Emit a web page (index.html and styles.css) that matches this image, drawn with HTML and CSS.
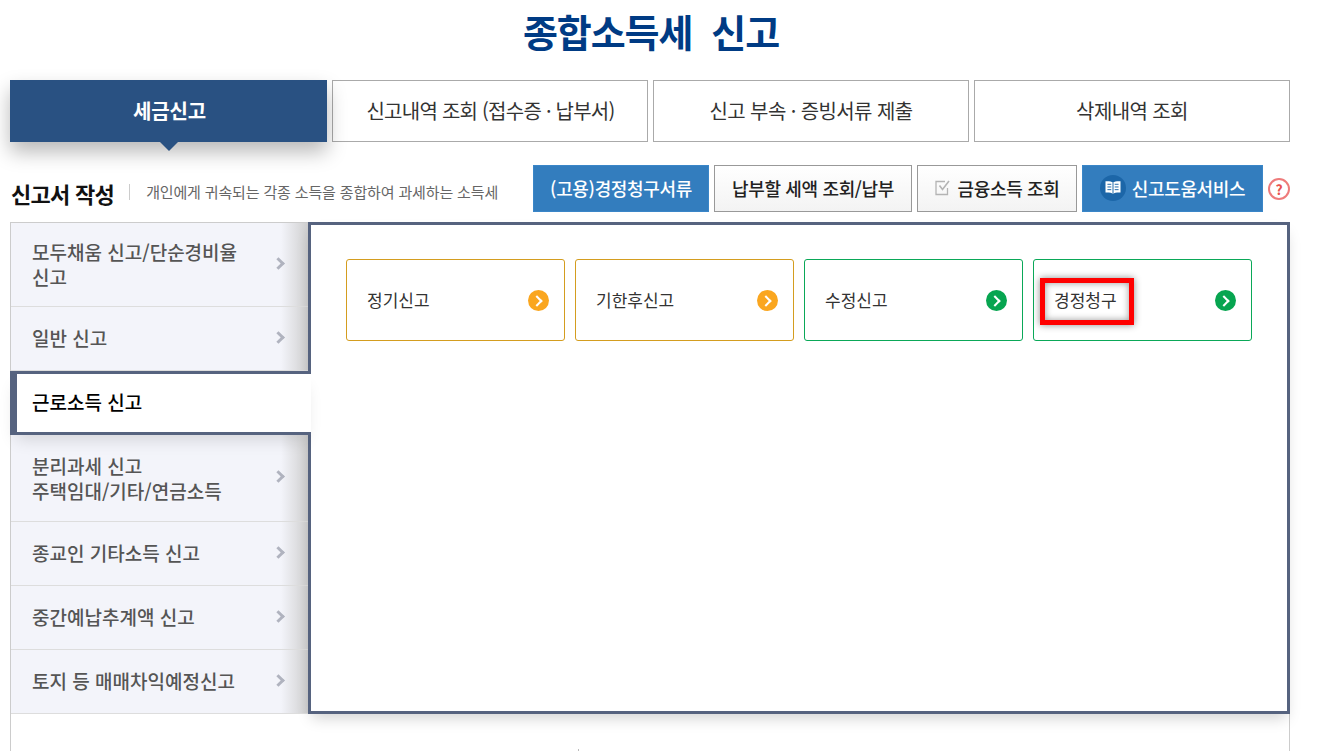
FILE: index.html
```html
<!DOCTYPE html>
<html lang="ko">
<head>
<meta charset="utf-8">
<title>종합소득세 신고</title>
<link rel="stylesheet" href="styles.css">
</head>
<body>
<div class="page">
  <h1 class="title">종합소득세&nbsp; 신고</h1>
  <nav class="tabs">
    <a class="tab tab-on">세금신고</a>
    <a class="tab tab-long">신고내역 조회 (접수증 · 납부서)</a>
    <a class="tab">신고 부속 · 증빙서류 제출</a>
    <a class="tab">삭제내역 조회</a>
  </nav>
  <div class="bar">
    <h2 class="sub">신고서 작성</h2>
    <p class="desc">개인에게 귀속되는 각종 소득을 종합하여 과세하는 소득세</p>
    <div class="btns">
      <a class="btn btn-blue btn-a">(고용)경정청구서류</a>
      <a class="btn btn-grey btn-b">납부할 세액 조회/납부</a>
      <a class="btn btn-grey btn-c">
        <svg class="chk" width="16" height="16" viewBox="0 0 16 16"><path d="M12.500 8v6.500H1V1.500h9" fill="none" stroke="#b4b4b4" stroke-width="1.300"/><path d="M4.500 5.500l3 4L14 1" fill="none" stroke="#b4b4b4" stroke-width="1.600"/></svg>
        금융소득 조회</a>
      <a class="btn btn-blue btn-d">
        <span class="book"><svg width="18" height="15" viewBox="0 0 16 14"><path d="M8 2.500C6.500 1.300 4 1 1 1.200v10.500c3-.2 5.500.1 7 1.300 1.500-1.200 4-1.500 7-1.300V1.200C12 1 9.500 1.300 8 2.500z" fill="#fff"/><path d="M8 2.500V13M2.800 4h3.600M2.800 6.500h3.600M2.800 9h3.600M9.600 4h3.600M9.600 6.500h3.600M9.600 9h3.600" stroke="#1c66a8" stroke-width=".9" fill="none"/></svg></span>
        신고도움서비스</a>
      <span class="help">?</span>
    </div>
  </div>
  <div class="frame">
    <ul class="side">
      <li class="item item-2">모두채움 신고/단순경비율<br>신고<i class="arr"></i></li>
      <li class="item item-s">일반 신고<i class="arr"></i></li>
      <li class="item item-on">근로소득 신고</li>
      <li class="item item-3">분리과세 신고<br>주택임대/기타/연금소득<i class="arr"></i></li>
      <li class="item item-s">종교인 기타소득 신고<i class="arr"></i></li>
      <li class="item item-s">중간예납추계액 신고<i class="arr"></i></li>
      <li class="item item-s">토지 등 매매차익예정신고<i class="arr"></i></li>
    </ul>
    <main class="main">
      <a class="card card-y">정기신고<i class="go go-y"></i></a>
      <a class="card card-y">기한후신고<i class="go go-y"></i></a>
      <a class="card card-g">수정신고<i class="go go-g"></i></a>
      <a class="card card-g">경정청구<i class="go go-g"></i><span class="mark"></span></a>
    </main>
    <span class="tick"></span>
  </div>
</div>
</body>
</html>
```

FILE: styles.css
```css
* { box-sizing: border-box; }
html, body { margin: 0; padding: 0; height: 751px; overflow: hidden; background: #fff; }
body { font-family: "Noto Sans CJK KR", "Noto Sans", sans-serif; color: #333; }
a { display: flex; text-decoration: none; }
ul { list-style: none; margin: 0; padding: 0; }
.page { width: 1280px; margin-left: 10px; }

.title { margin: 0; height: 80px; padding: 5px 0 0 2px; text-align: center; font-size: 38px; line-height: 52px; font-weight: 700; letter-spacing: -1.1px; color: #003b84; }

.tabs { display: flex; gap: 5px; height: 62px; }
.tab { flex: 0 0 316px; align-items: center; justify-content: center; padding-bottom: 2px; background: #fff; border: 1px solid #aaa; font-size: 20px; letter-spacing: -.6px; color: #333; }
.tab-long { letter-spacing: -.75px; padding-left: 1px; }
.tab-on { position: relative; flex: 0 0 317px; padding-left: 2px; background: #295182; border-color: #295182; color: #fff; font-weight: 700; letter-spacing: -.15px; box-shadow: 0 10px 20px rgba(0,0,0,.28); }
.tab-on::after { content: ""; position: absolute; left: 148px; bottom: -10px; border: 10px solid transparent; border-bottom: 0; border-top-color: #295182; }

.bar { display: flex; align-items: center; height: 80px; padding-top: 6px; }
.sub { margin: 0 0 0 1px; font-size: 22px; line-height: 30px; font-weight: 700; letter-spacing: -.7px; color: #111; position: relative; top: 8px; }
.desc { margin: 14px 0 0 15px; padding-left: 16px; font-size: 15px; line-height: 16px; letter-spacing: -.15px; color: #666; border-left: 1px solid #ccc; }
.btns { display: flex; align-items: center; gap: 5px; margin-left: auto; height: 47px; margin-top: 7px; }
.btn { height: 47px; align-items: center; justify-content: center; padding-bottom: 2px; font-size: 18px; font-weight: 500; letter-spacing: -.35px; }
.btn-blue { background: #337dbe; color: #fff; border: 1px solid #3a86c8; }
.btn-grey { background: linear-gradient(#fff, #f3f3f3); color: #222; border: 1px solid #999; }
.btn-a { width: 176px; }
.btn-b { width: 198px; }
.btn-c { width: 160px; }
.btn-d { width: 181px; }
.chk { margin-right: 7px; }
.book { display: flex; align-items: center; justify-content: center; width: 26px; height: 26px; margin-right: 6px; border-radius: 50%; background: #1c66a8; }
.help { display: flex; align-items: center; justify-content: center; width: 22px; height: 22px; border: 2px solid #ee7b7b; border-radius: 50%; font-size: 14px; line-height: 1; font-weight: 700; color: #e8534f; }

.frame { position: relative; display: flex; height: 529px; border-left: 1px solid #ccc; border-right: 1px solid #ccc; }
.side { flex: 0 0 297px; min-width: 0; height: 492px; background: #fff; }
.item { position: relative; display: flex; flex-direction: column; justify-content: center; height: 64px; padding: 0 0 2px 21px; font-size: 19px; line-height: 25px; font-weight: 500; color: #555; background: linear-gradient(to right, #f3f4fa 0, #f3f4fa 270px, #cfcfcf 297px); border-bottom: 1px solid #ddd; }
.item:first-child { border-top: 1px solid #ccc; }
.item-2 { height: 85px; }
.item-3 { height: 87px; padding-bottom: 0; }
.item-on { z-index: 2; width: 301px; margin-left: -1px; padding-left: 15px; padding-bottom: 4px; background: #fff; color: #000; border: 3px solid #56637f; border-width: 3px 0 3px 7px; box-shadow: 0 10px 16px -6px rgba(0,0,0,.14); }
.arr { position: absolute; right: 25px; top: 50%; width: 9px; height: 9px; margin-top: -6px; border-top: 3px solid #b0b3bf; border-right: 3px solid #b0b3bf; transform: rotate(45deg); }

.main { position: relative; display: flex; flex: 0 0 982px; align-items: flex-start; gap: 10px; height: 492px; padding: 34px 35px; background: #fff; border: 3px solid #56637f; box-shadow: 0 8px 14px -4px rgba(0,0,0,.18); }
.card { position: relative; flex: 0 0 219px; height: 82px; align-items: center; padding: 0 0 2px 20px; font-size: 17px; color: #333; background: #fff; border: 1px solid; border-radius: 3px; }
.card-y { border-color: #d49d1f; }
.card-g { border-color: #0aa858; }
.go { position: absolute; right: 15px; top: 30px; width: 21px; height: 21px; border-radius: 50%; }
.go::after { content: ""; position: absolute; left: 5px; top: 7px; width: 6px; height: 6px; border-top: 2px solid #fff; border-right: 2px solid #fff; transform: rotate(45deg); }
.go-y { background: #faa61f; }
.go-g { background: #07a550; }
.mark { position: absolute; left: 6px; top: 18px; width: 94px; height: 47px; border: 5px solid #f00; box-shadow: 0 0 7px rgba(0,0,0,.45), inset 0 0 7px rgba(0,0,0,.4); }
.tick { position: absolute; left: 567px; bottom: 0; width: 1px; height: 2px; background: #bbb; }
```
